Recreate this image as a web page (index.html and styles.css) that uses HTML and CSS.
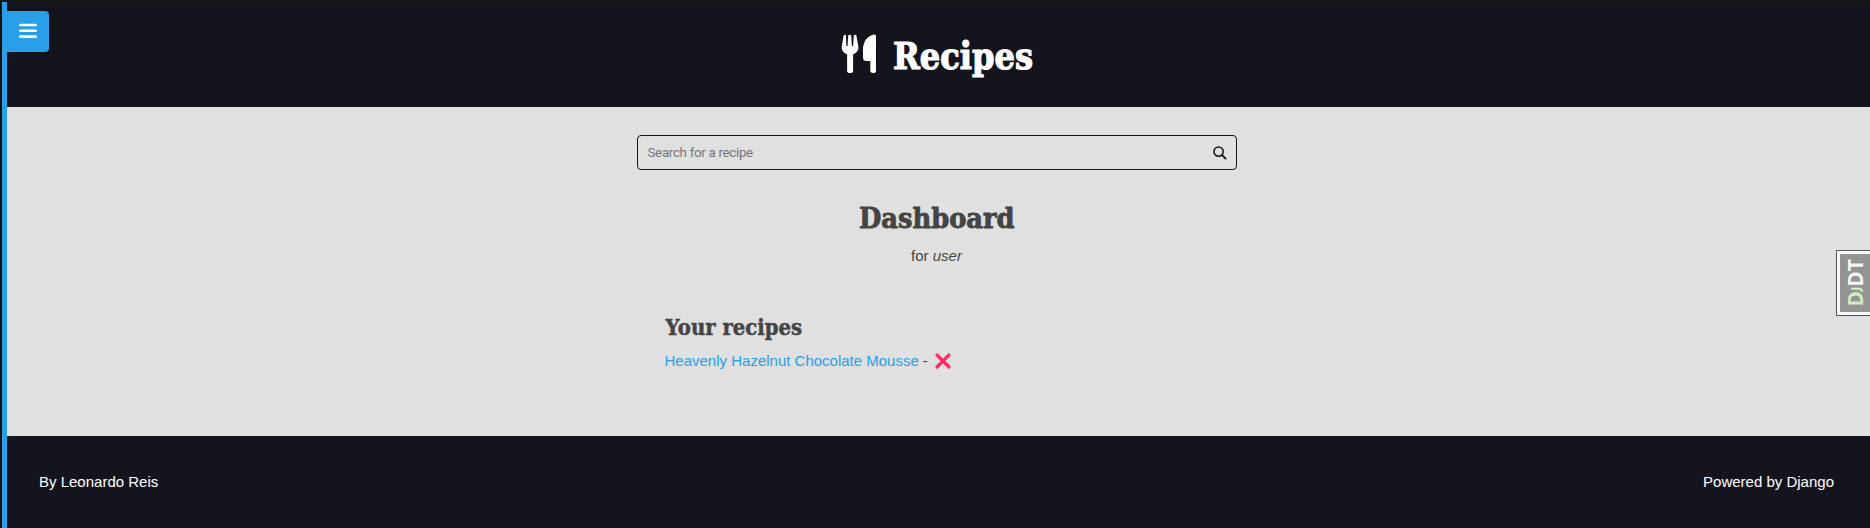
FILE: index.html
```html
<!DOCTYPE html>
<html lang="en">
<head>
<meta charset="utf-8">
<title>Recipes</title>
<link rel="stylesheet" href="styles.css">
</head>
<body>
<div class="page">
  <header class="header">
    <button class="menu-button" aria-label="Menu"><svg width="18" height="16" viewBox="0 0 18 16"><path d="M1.300 2h15.400M1.300 7.700h15.400M1.300 13.600h15.400" stroke="#fff" stroke-width="2.600" stroke-linecap="round"/></svg></button>
    <h1 class="brand">
      <svg class="cutlery" width="36" height="40" viewBox="0 0 36 40" fill="#fff"><path d="M2.600 1.500Q3.400.3 4.900 1L5.300 12h1.200L7.200 1.500q1.400-1.400 3 0L10.900 12h1.200L12.900 1.200q1.600-1 2.500.3l2 11.500q.5 5-5.300 7.500V37q0 2-3 2t-3-2V20.500Q.2 18 .7 13z"/><path d="M35 2v35q0 2-2.800 2T29.300 37V27H25.500Q22 27 22 23.500V13Q23.500 3 32.500.5 35 0 35 2z"/></svg>
      <svg class="brand-text" width="141" height="52"><text x="0" y="36.500" textLength="140" lengthAdjust="spacingAndGlyphs">Recipes</text></svg>
    </h1>
  </header>
  <main class="main">
    <form class="search">
      <input class="search-input" type="text" placeholder="Search for a recipe">
      <svg width="14" height="14" viewBox="0 0 14 14" fill="none" stroke="#14141f" stroke-width="1.600"><circle cx="5.600" cy="5.600" r="4.600"/><path d="M8.900 8.900l4.200 4.200" stroke-width="1.900"/></svg>
    </form>
    <h2 class="title"><svg width="156" height="40"><text x="0" y="29" textLength="155.500" lengthAdjust="spacingAndGlyphs">Dashboard</text></svg></h2>
    <p class="subtitle">for <em>user</em></p>
    <section class="recipes">
      <h3 class="recipes-title"><svg width="138" height="30"><text x="0.500" y="21.500" textLength="136.500" lengthAdjust="spacingAndGlyphs">Your recipes</text></svg></h3>
      <p class="recipe"><a class="recipe-link" href="#">Heavenly Hazelnut Chocolate Mousse</a><span>-</span><svg width="16" height="16" viewBox="0 0 16 16"><path d="M2 2l12 12M14 2L2 14" stroke="#fc2d62" stroke-width="3.200" stroke-linecap="round"/></svg></p>
    </section>
  </main>
  <footer class="footer"><span>By Leonardo Reis</span><span>Powered by Django</span></footer>
</div>
<aside class="debug"><div class="debug-inner"><span class="debug-text"><span class="debug-green">D<small>J</small></span>DT</span></div></aside>
</body>
</html>
```
FILE: styles.css
```css
* { box-sizing: border-box; }
body { margin: 0; height: 528px; overflow: hidden; background: #e0e0e0; color: #444; font: 15px/24px "Liberation Sans", Arial, sans-serif; }
h1, h2, h3, p { margin: 0; font-weight: normal; }
svg { display: block; flex: none; overflow: visible; }
.page { height: 528px; border-top: 2px solid #181818; border-left: 2px solid #111; display: flex; flex-direction: column; box-shadow: inset 5px 0 #289fe8; padding-left: 5px; }
.header { position: relative; height: 105px; padding-right: 3px; background: #14141f; display: flex; justify-content: center; }
.menu-button { position: absolute; left: -5px; top: 9px; width: 47px; height: 41px; padding: 0 0 1px 17px; border: 0; border-radius: 0 4px 4px 0; background: #289fe8; display: flex; align-items: center; }
.brand { display: flex; padding-top: 30px; gap: 16px; }
.cutlery { margin-top: 2px; }
.brand-text, .title, .recipes-title { font-family: "DejaVu Serif", serif; font-weight: bold; fill: #444; stroke: #444; stroke-width: .5px; }
.brand-text { font-size: 36.6px; fill: #fff; stroke: #fff; stroke-width: 1.2px; }
.main { height: 329px; padding-right: 4px; display: flex; flex-direction: column; align-items: center; }
.search { width: 600px; height: 35px; margin-top: 28px; padding: 0 9px 0 10px; border: 1px solid #14141f; border-radius: 4px; display: flex; align-items: center; }
.search-input { flex: 1; padding: 0; border: 0; background: none; font: 13.333px Roboto, sans-serif; letter-spacing: -.3px; outline: 0; }
.search-input::placeholder { color: #757575; }
.title { margin-top: 29px; font-size: 28.8px; stroke-width: .9px; }
.subtitle { margin-top: 5px; }
.recipes { width: 544px; margin-top: 45px; }
.recipes-title { font-size: 21.400px; }
.recipe { display: flex; align-items: center; margin-top: 6px; }
.recipe span { margin: 0 7px 0 4px; }
.recipe-link { color: #289fe8; text-decoration: none; }
.footer { flex: 1; padding: 34px 36px 0 32px; background: #14141f; color: #fff; display: flex; justify-content: space-between; }
.debug { position: absolute; right: 0; top: 250px; width: 34px; height: 66px; padding: 3px 0 3px 3px; border: 1px solid #555; border-right: 0; background: #f8f8f8; }
.debug-inner { height: 58px; background: #949494; display: flex; align-items: center; justify-content: center; }
.debug-text { writing-mode: vertical-rl; transform: rotate(180deg); font: bold 21px/22px "Open Sans", sans-serif; color: #f4f4f4; }
.debug-green { color: #d3ecbd; }
.debug-green small { font-size: 13px; }
```
